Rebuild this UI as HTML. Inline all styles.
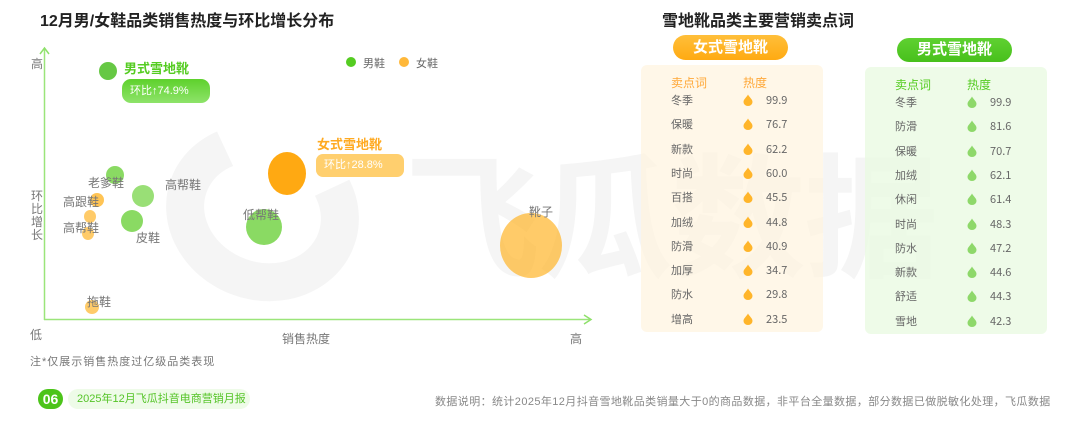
<!DOCTYPE html>
<html><head><meta charset="utf-8"><style>
*{margin:0;padding:0;box-sizing:border-box}
body{width:1080px;height:430px;background:#fff;position:relative;overflow:hidden;font-family:"Liberation Sans","Noto Sans CJK SC",sans-serif;color:#666}
.a{position:absolute;white-space:nowrap}
.c{position:absolute;border-radius:50%}
.t{font-size:12px;color:#777}
.g{background:#6dd13c}
.o{background:#ffb52a}
.row{position:absolute;font-size:11px;color:#666;font-family:"Noto Sans CJK SC",sans-serif;line-height:14px}
.wm{position:absolute;color:#f5f5f5;font-weight:bold;font-size:135px;left:405px;top:110px;letter-spacing:-2px;font-family:"Noto Sans CJK SC",sans-serif}
</style></head><body>
<div class="wm">飞瓜数据</div>
<div class="c" style="left:165px;top:125px;width:195px;height:175px;border:38px solid #f5f5f5;border-top-color:transparent;transform:rotate(20deg)"></div>

<div class="a" style="left:40px;top:7px;font-size:16px;font-weight:bold;color:#222">12月男/女鞋品类销售热度与环比增长分布</div>
<svg class="a" style="left:0;top:0" width="600" height="330">
<line x1="44.5" y1="48" x2="44.5" y2="320" stroke="#9be57a" stroke-width="1.5"/>
<polyline points="40,54 44.5,48 49,54" fill="none" stroke="#8ee06a" stroke-width="1.5"/>
<line x1="44" y1="319.5" x2="590" y2="319.5" stroke="#9be57a" stroke-width="1.5"/>
<polyline points="584,315 591,319.5 584,324" fill="none" stroke="#8ee06a" stroke-width="1.5"/>
</svg>
<div class="a t" style="left:31px;top:55px">高</div>
<div class="a t" style="left:31px;top:190px;line-height:13px;width:12px;white-space:normal">环比增长</div>
<div class="a t" style="left:30px;top:326px">低</div>
<div class="a t" style="left:282px;top:330px">销售热度</div>
<div class="a t" style="left:570px;top:330px">高</div>
<div class="a t" style="left:30px;top:353px;letter-spacing:1px;font-size:11px">注*仅展示销售热度过亿级品类表现</div>

<div class="c" style="left:346px;top:57px;width:10px;height:10px;background:#55cc22"></div>
<div class="a" style="left:363px;top:55px;font-size:11px">男鞋</div>
<div class="c" style="left:399px;top:57px;width:10px;height:10px;background:#ffb83a"></div>
<div class="a" style="left:416px;top:55px;font-size:11px">女鞋</div>

<div class="c" style="left:99px;top:62px;width:18px;height:18px;background:#66c844"></div>
<div class="a" style="left:124px;top:58px;font-size:13px;font-weight:bold;color:#55cc22">男式雪地靴</div>
<div class="a" style="left:122px;top:79px;width:88px;height:24px;border-radius:9px;background:linear-gradient(#5ed12c,#8ee36a);color:#fff;font-size:11px;line-height:24px;padding-left:8px">环比↑74.9%</div>

<div class="c" style="left:268px;top:152px;width:38px;height:43px;background:#ffa912"></div>
<div class="a" style="left:317px;top:134px;font-size:13px;font-weight:bold;color:#ffaa22">女式雪地靴</div>
<div class="a" style="left:316px;top:154px;width:88px;height:23px;border-radius:7px;background:#ffcf6e;color:#fff;font-size:11px;line-height:23px;padding-left:8px">环比↑28.8%</div>

<div class="c g" style="left:106px;top:166px;width:18px;height:18px;opacity:.8"></div>
<div class="c g" style="left:132px;top:185px;width:22px;height:22px;opacity:.7"></div>
<div class="c o" style="left:90px;top:193px;width:14px;height:14px;opacity:.8"></div>
<div class="c o" style="left:84px;top:210px;width:12px;height:13px;opacity:.7"></div>
<div class="c o" style="left:82px;top:227px;width:12px;height:13px;opacity:.7"></div>
<div class="c g" style="left:121px;top:210px;width:22px;height:22px;opacity:.8"></div>
<div class="c g" style="left:246px;top:209px;width:36px;height:36px;opacity:.8"></div>
<div class="c o" style="left:500px;top:213px;width:62px;height:65px;opacity:.7"></div>
<div class="c o" style="left:85px;top:300px;width:14px;height:14px;opacity:.7"></div>

<div class="a t" style="left:88px;top:174px">老爹鞋</div>
<div class="a t" style="left:165px;top:176px">高帮鞋</div>
<div class="a t" style="left:63px;top:193px">高跟鞋</div>
<div class="a t" style="left:63px;top:219px">高帮鞋</div>
<div class="a t" style="left:136px;top:229px">皮鞋</div>
<div class="a t" style="left:243px;top:206px">低帮鞋</div>
<div class="a t" style="left:529px;top:203px">靴子</div>
<div class="a t" style="left:87px;top:293px">拖鞋</div>

<div class="a" style="left:662px;top:7px;font-size:16px;font-weight:bold;color:#222">雪地靴品类主要营销卖点词</div>
<div class="a" style="left:673px;top:35px;width:115px;height:25px;border-radius:13px;background:linear-gradient(#ffbf3a,#ffaa12);color:#fff;font-size:15px;font-weight:bold;text-align:center;line-height:25px">女式雪地靴</div>
<div class="a" style="left:897px;top:38px;width:115px;height:24px;border-radius:12px;background:linear-gradient(#5fd131,#48c01c);color:#fff;font-size:15px;font-weight:bold;text-align:center;line-height:24px">男式雪地靴</div>
<div class="a" style="left:641px;top:65px;width:182px;height:267px;border-radius:6px;background:rgba(255,244,222,.7)"></div>
<div class="a" style="left:865px;top:67px;width:182px;height:267px;border-radius:6px;background:rgba(232,250,224,.75)"></div>

<div class="a" style="left:671px;top:74px;font-size:12px;color:#ffa838">卖点词</div>
<div class="a" style="left:743px;top:74px;font-size:12px;color:#ffa838">热度</div>
<div class="a" style="left:895px;top:76px;font-size:12px;color:#55cc22">卖点词</div>
<div class="a" style="left:967px;top:76px;font-size:12px;color:#55cc22">热度</div>

<div id="L"></div>
<script>
var f=[["冬季","99.9"],["保暖","76.7"],["新款","62.2"],["时尚","60.0"],["百搭","45.5"],["加绒","44.8"],["防滑","40.9"],["加厚","34.7"],["防水","29.8"],["增高","23.5"]];
var m=[["冬季","99.9"],["防滑","81.6"],["保暖","70.7"],["加绒","62.1"],["休闲","61.4"],["时尚","48.3"],["防水","47.2"],["新款","44.6"],["舒适","44.3"],["雪地","42.3"]];
var h="";
function drop(x,y,c){return '<svg class="a" style="left:'+x+'px;top:'+y+'px" width="10" height="12" viewBox="0 0 10 12"><path d="M5 0.5C6 3 9.5 5 9.5 8A4.5 4 0 0 1 0.5 8C0.5 5 4 3 5 0.5Z" fill="'+c+'"/></svg>';}
for(var i=0;i<10;i++){var y=93+i*24.3;
h+='<div class="row" style="left:671px;top:'+y+'px">'+f[i][0]+'</div>'+drop(743,y+1,'#ffb52a')+'<div class="row" style="left:766px;top:'+y+'px">'+f[i][1]+'</div>';
var y2=95+i*24.3;
h+='<div class="row" style="left:895px;top:'+y2+'px">'+m[i][0]+'</div>'+drop(967,y2+1,'#8ed86a')+'<div class="row" style="left:990px;top:'+y2+'px">'+m[i][1]+'</div>';}
document.getElementById("L").innerHTML=h;
</script>

<div class="a" style="left:38px;top:389px;width:25px;height:20px;border-radius:10px;background:#4cc41a;color:#fff;font-weight:bold;font-size:14px;text-align:center;line-height:20px">06</div>
<div class="a" style="left:68px;top:389px;width:182px;height:20px;border-radius:10px;background:#eefbe8;color:#55c428;font-size:11px;line-height:20px;padding-left:9px">2025年12月飞瓜抖音电商营销月报</div>
<div class="a" style="left:435px;top:393px;font-size:11px;color:#888;letter-spacing:0.4px">数据说明：统计2025年12月抖音雪地靴品类销量大于0的商品数据，非平台全量数据，部分数据已做脱敏化处理，飞瓜数据</div>
</body></html>
